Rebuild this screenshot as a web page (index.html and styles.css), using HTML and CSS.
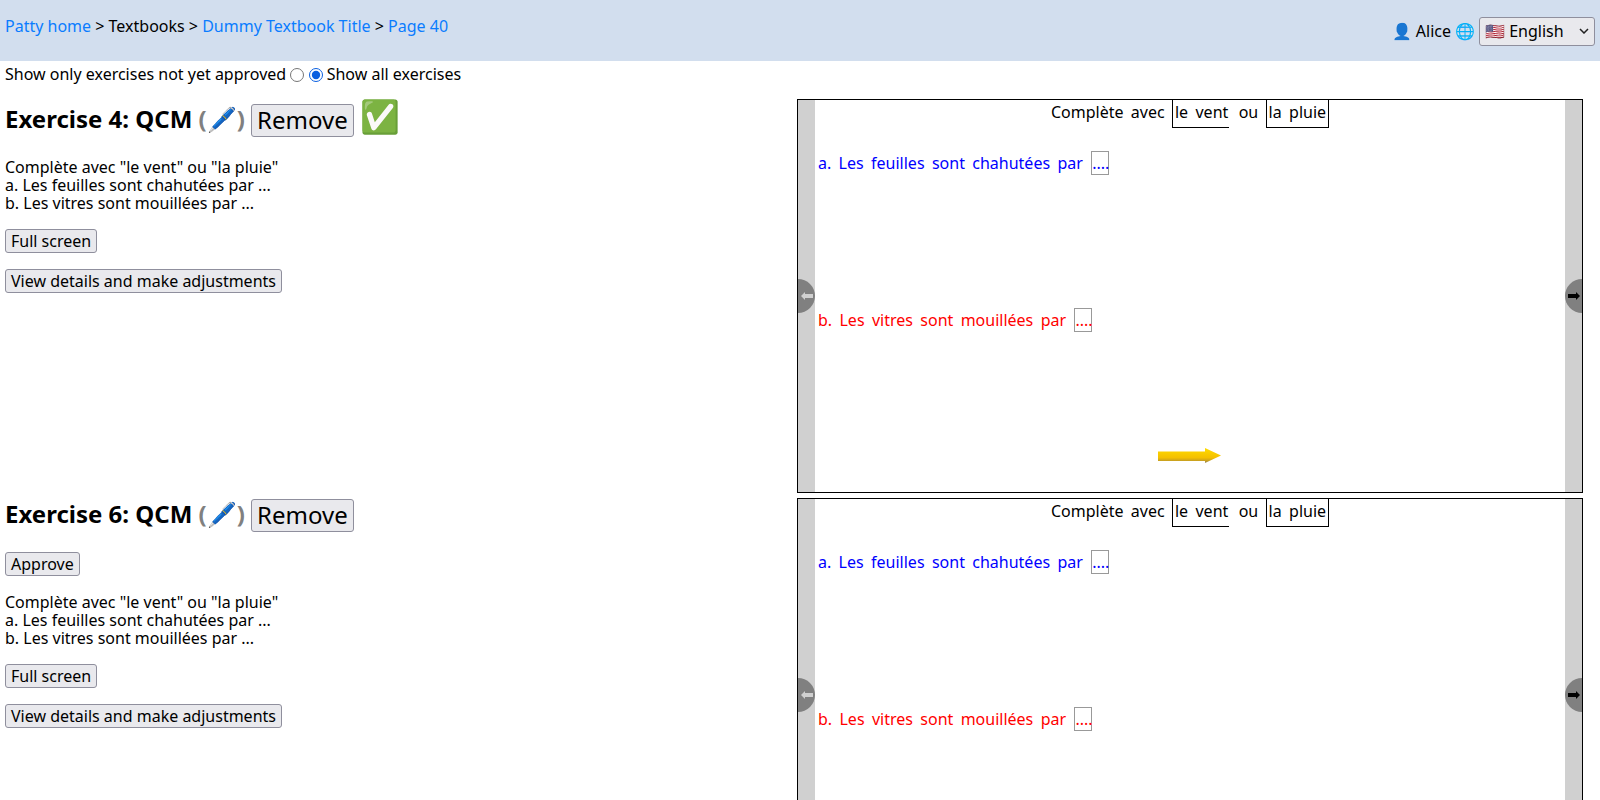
FILE: index.html
```html
<!DOCTYPE html>
<html lang="en">
<head>
<meta charset="utf-8">
<title>Page 40</title>
<link rel="stylesheet" href="styles.css">
</head>
<body>
<header class="topbar">
  <nav class="crumbs"><a href="#">Patty home</a> &gt; Textbooks &gt; <a href="#">Dummy Textbook Title</a> &gt; <a href="#">Page 40</a></nav>
  <div class="user">
    <span>👤</span><span>Alice</span><span>🌐</span>
    <button class="lang"><span class="lang-text">🇺🇸 English</span><svg class="chev" viewBox="0 0 10 6" width="10" height="6"><path d="M1 1l4 4 4-4" fill="none" stroke="#222" stroke-width="1.5"/></svg></button>
  </div>
</header>
<div class="filter">Show only exercises not yet approved <input type="radio" name="f" class="radio"> <input type="radio" name="f" class="radio" checked> Show all exercises</div>

<section class="exercise">
  <div class="info">
    <h2 class="title title-done">Exercise 4: QCM <span class="edit">(<span class="pen">🖊️</span>)</span> <button class="big">Remove</button> <span class="check">✅</span></h2>
    <p class="desc">Complète avec "le vent" ou "la pluie"<br>a. Les feuilles sont chahutées par ...<br>b. Les vitres sont mouillées par ...</p>
    <p class="act"><button class="btn">Full screen</button></p>
    <p class="act"><button class="btn">View details and make adjustments</button></p>
  </div>
  <div class="frame">
    <div class="side"><span class="nav nav-l"><svg viewBox="0 0 12 8" width="12" height="8"><path d="M0 4l4-4v2h8v4H4v2z" fill="#d0d0d0"/></svg></span></div>
    <div class="page">
      <div class="head">Complète avec <span class="opt opt-open">le vent</span> ou <span class="opt">la pluie</span></div>
      <div class="line blue">a. Les feuilles sont chahutées par <span class="gap">....</span></div>
      <div class="line red">b. Les vitres sont mouillées par <span class="gap">....</span></div>
      <div class="next"><svg viewBox="0 0 63 16" width="63" height="16"><defs><linearGradient id="g1" x1="0" y1="0" x2="0" y2="1"><stop offset="0" stop-color="#ffdc00"/><stop offset=".65" stop-color="#f4c000"/><stop offset=".85" stop-color="#c8a020"/><stop offset="1" stop-color="#8c8468"/></linearGradient></defs><path d="M0 3.500h47V0l16 7.500L47 15v-2H0z" fill="url(#g1)"/></svg></div>
    </div>
    <div class="side"><span class="nav nav-r"><svg viewBox="0 0 12 8" width="12" height="8"><path d="M12 4L8 0v2H0v4h8v2z" fill="#000"/></svg></span></div>
  </div>
</section>

<section class="exercise">
  <div class="info">
    <h2 class="title">Exercise 6: QCM <span class="edit">(<span class="pen">🖊️</span>)</span> <button class="big">Remove</button></h2>
    <p class="act approve"><button class="btn">Approve</button></p>
    <p class="desc">Complète avec "le vent" ou "la pluie"<br>a. Les feuilles sont chahutées par ...<br>b. Les vitres sont mouillées par ...</p>
    <p class="act"><button class="btn">Full screen</button></p>
    <p class="act"><button class="btn">View details and make adjustments</button></p>
  </div>
  <div class="frame">
    <div class="side"><span class="nav nav-l"><svg viewBox="0 0 12 8" width="12" height="8"><path d="M0 4l4-4v2h8v4H4v2z" fill="#d0d0d0"/></svg></span></div>
    <div class="page">
      <div class="head">Complète avec <span class="opt opt-open">le vent</span> ou <span class="opt">la pluie</span></div>
      <div class="line blue">a. Les feuilles sont chahutées par <span class="gap">....</span></div>
      <div class="line red">b. Les vitres sont mouillées par <span class="gap">....</span></div>
    </div>
    <div class="side"><span class="nav nav-r"><svg viewBox="0 0 12 8" width="12" height="8"><path d="M12 4L8 0v2H0v4h8v2z" fill="#000"/></svg></span></div>
  </div>
</section>
</body>
</html>
```
FILE: styles.css
```css
* { box-sizing: border-box; }
html, body { margin: 0; height: 800px; overflow: hidden; }
body { font: 16px/18.4px "Noto Sans", sans-serif; color: #000; background: #fff; }
a { color: #0a7cff; text-decoration: none; }
button { font-family: inherit; color: #000; background: #e9e9ed; border: 1px solid #8f8f9d; border-radius: 3px; }
.topbar { height: 61px; background: #d2deee; padding: 0 5px; display: flex; justify-content: space-between; }
.crumbs { padding-top: 17px; }
.user { display: flex; align-items: center; gap: 4px; padding: 1px 0 0 0; height: 61px; }
.lang { width: 116px; height: 29px; font-size: 16px; padding: 0 5px; display: flex; align-items: center; justify-content: space-between; }
.filter { height: 25px; padding: 4px 5px 0; }
.radio { margin: 0; width: 14px; height: 14px; vertical-align: -2px; accent-color: #0a5fe0; }
.exercise { display: flex; height: 399px; padding-left: 5px; }
.info { width: 792px; flex: none; }
.title { margin: 0; padding-top: 12px; font-size: 24px; line-height: 33px; font-weight: 700; }
.title-done { padding-top: 11px; margin-bottom: 21px; }
.edit { color: #808080; }
.pen { font-weight: 400; }
.big { font-size: 24px; line-height: 26px; padding: 0 5px; height: 33px; font-weight: 400; vertical-align: -1px; }
.check { font-size: 32px; font-weight: 400; line-height: 38px; }
.desc { margin: 16px 0; }
.act { margin: 16px 0 16.500px; }
.approve { margin: 20px 0 17px; }
.btn { font-size: 16px; height: 24px; padding: 0 5px; }
.frame { width: 786px; height: 394px; margin-top: 13px; border: 1px solid #000; display: flex; flex: none; overflow: hidden; }
.side { width: 17px; flex: none; background: #d0d0d0; position: relative; }
.nav { position: absolute; top: 179px; width: 34px; height: 34px; border-radius: 50%; background: #808080; display: flex; align-items: center; justify-content: center; }
.nav-l { left: -17px; padding-left: 17px; }
.nav-r { left: 0; padding-right: 17px; }
.page { flex: 1; padding: 0 3px; word-spacing: 3.2px; position: relative; }
.head { text-align: center; height: 31px; line-height: 24px; }
.opt { display: inline-block; border: 1px solid #000; border-top: 0; padding: 0 2px; height: 28px; }
.opt-open { border-right: 0; padding-right: 1px; margin-right: 2px; }
.line { height: 157px; padding-top: 20px; line-height: 24px; }
.blue { color: #0000ff; }
.red { color: #ff0000; }
.gap { display: inline-block; border: 1px solid #999; width: 18px; height: 24px; margin: 0 0 4px 1px; vertical-align: middle; line-height: 22px; }
.next { position: absolute; left: 343px; top: 348px; line-height: 0; }
```
